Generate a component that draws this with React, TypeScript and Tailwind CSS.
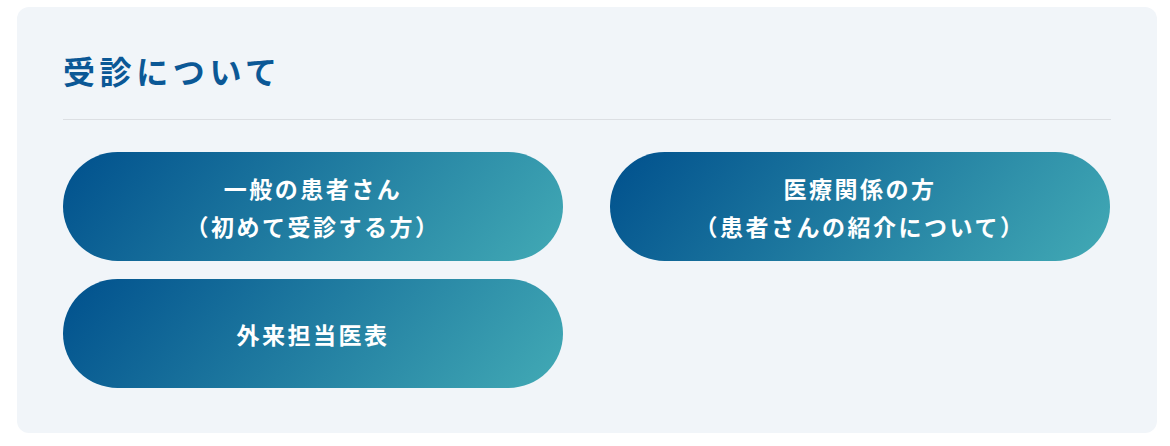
const links = [
  { lines: ['一般の患者さん', '（初めて受診する方）'] },
  { lines: ['医療関係の方', '（患者さんの紹介について）'] },
  { lines: ['外来担当医表'] },
];

export default function App() {
  return (
    <div
      className="min-h-[446px] bg-white pl-[17px] pt-[7px]"
      style={{ fontFamily: '"Noto Sans CJK JP", "Noto Sans", sans-serif' }}
    >
      <section className="w-[1140px] rounded-[12px] bg-[#f1f5f9] px-[46px] pb-[45px] pt-[43px]">
        <h2 className="border-b border-[#dcdfe3] pb-[29px] text-[32px] font-bold leading-[40px] tracking-[4.6px] text-[#0b5896]">
          受診について
        </h2>
        <div className="mt-[32px] grid w-[1048px] grid-cols-[500px_500px] gap-x-[47px] gap-y-[18px]">
          {links.map((l) => (
            <a
              key={l.lines[0]}
              href="#"
              className="flex h-[109px] flex-col items-center justify-center rounded-full bg-[linear-gradient(130deg,#00508d_0%,#42aab5_100%)] text-center text-[23px] font-bold leading-[38px] tracking-[2.5px] text-white"
            >
              {l.lines.map((t) => (
                <span key={t}>{t}</span>
              ))}
            </a>
          ))}
        </div>
      </section>
    </div>
  );
}
